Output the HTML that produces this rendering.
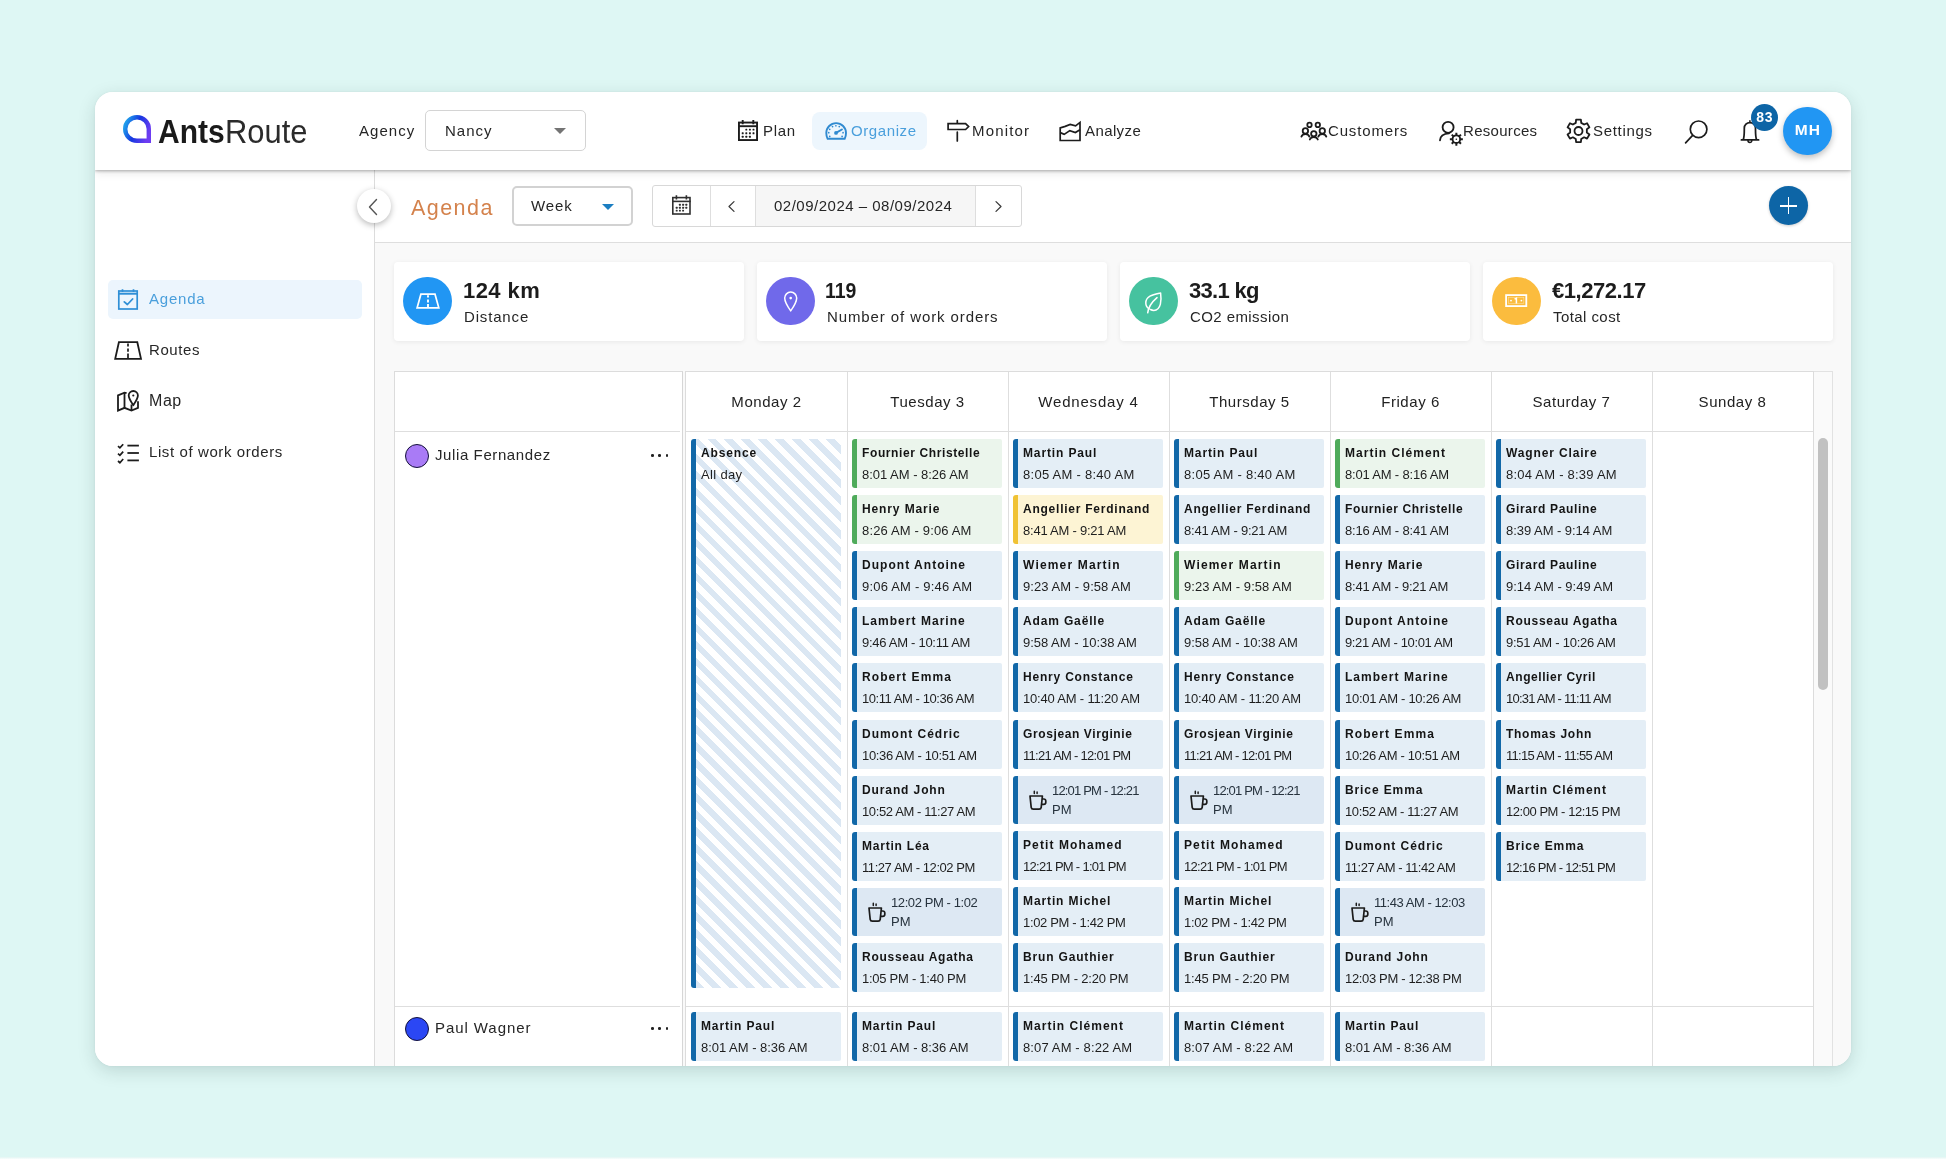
<!DOCTYPE html>
<html lang="en">
<head>
<meta charset="utf-8">
<title>AntsRoute - Agenda</title>
<style>
*{box-sizing:border-box;margin:0;padding:0}
html,body{width:1946px;height:1159px;overflow:hidden}
body{background:#def7f4;font-family:"Liberation Sans",sans-serif;color:#222;position:relative}
.abs{position:absolute}
#app{position:absolute;left:95px;top:92px;width:1756px;height:974px;background:#fff;border-radius:18px;box-shadow:0 5px 18px rgba(0,40,40,.15),0 0 3px rgba(0,35,35,.05);overflow:hidden}
/* everything inside #app is positioned in page coords via this wrapper */
#pg{position:absolute;left:-95px;top:-92px;width:1946px;height:1159px;will-change:transform}
#side{position:absolute;left:95px;top:170px;width:280px;height:896px;background:#fff;border-right:1px solid #dcdcdc}
#tool{position:absolute;left:375px;top:170px;width:1476px;height:73px;background:#fff;border-bottom:1px solid #dedede}
#content{position:absolute;left:375px;top:243px;width:1476px;height:823px;background:#f9f9f9}
#head{position:absolute;left:95px;top:92px;width:1756px;height:78px;background:#fff;box-shadow:0 1px 3px rgba(0,0,0,.3),0 3px 9px rgba(0,0,0,.09)}
.t{position:absolute;white-space:nowrap;line-height:20px;font-size:15px;color:#262626}
svg{position:absolute;overflow:visible}
svg.ic{fill:none;stroke:#1d1d1d;stroke-width:1.6;stroke-linecap:round;stroke-linejoin:round}
/* logo */
.lg{position:absolute;top:111.8px;font-size:33px;line-height:40px;white-space:nowrap;transform-origin:0 0}
#lgA{left:158px;font-weight:700;color:#1a1a1a;transform:scaleX(.909)}
#lgR{left:225.4px;color:#2b2b2b;transform:scaleX(.936)}
/* selects */
.box{position:absolute;background:#fff;border:1px solid #d4d4d4;border-radius:5px}
/* nav */
#pill{position:absolute;left:811.6px;top:111.7px;width:115px;height:38px;background:#edf6fd;border-radius:8px}
/* stats */
.card{position:absolute;top:262px;width:350px;height:79px;background:#fff;border-radius:4px;box-shadow:0 1px 5px rgba(0,0,0,.07)}
.circ{position:absolute;left:9.3px;top:14.9px;width:48.6px;height:48.6px;border-radius:50%}
.card .v{position:absolute;left:69px;top:14.6px;font-size:22px;font-weight:700;line-height:28px;color:#1c1c1c;white-space:nowrap}
.card .l{position:absolute;left:70px;top:45px;font-size:15px;line-height:20px;color:#262626;white-space:nowrap;letter-spacing:.6px}
/* grid */
.ln{position:absolute;background:#dedede}
.dh{position:absolute;top:391.7px;width:161px;text-align:center;font-size:15px;line-height:20px;color:#222;letter-spacing:.55px;white-space:nowrap}
.ev{position:absolute;width:150px;height:49px;border-left:5px solid #1268a8;border-radius:3px 2px 2px 3px;background:#e4eef6;padding:3px 0 0 5px;white-space:nowrap;overflow:hidden}
.ev b{display:block;font-size:12px;line-height:22px;font-weight:700;color:#141414;letter-spacing:.5px}
.ev i{display:block;font-style:normal;font-size:13px;line-height:21px;color:#1e1e1e;letter-spacing:-.02px}
.ev.g{background:#ebf5ec;border-left-color:#4fab5b}
.ev.y{background:#fdf4d4;border-left-color:#f0c234}
.ev.k{height:48px;background:#dde8f3;padding:0}
.ev.k .kt{position:absolute;left:34px;top:5px;font-size:13px;line-height:19px;color:#26323d;white-space:nowrap}
svg.cup{left:11px;top:15.5px;width:18px;height:20px;fill:none;stroke:#1b1b1b;stroke-width:1.7;stroke-linecap:round;stroke-linejoin:round}
#abs{position:absolute;left:691px;top:439px;width:150px;height:549px;border-left:5px solid #1268a8;border-radius:3px;background:repeating-linear-gradient(45deg,#dbe7f3 0,#dbe7f3 6px,#fff 6px,#fff 12px);padding:3px 0 0 5px}
#abs b{display:block;font-size:12px;line-height:22px;font-weight:700;color:#141414;letter-spacing:.85px}
#abs i{display:block;font-style:normal;font-size:13px;line-height:21px;color:#1e1e1e;letter-spacing:.33px}
.av{position:absolute;left:405px;width:24px;height:24px;border-radius:50%;border:1.5px solid #15123a}
.dots{position:absolute;left:651px;width:18px;height:3px}
.dots:before,.dots:after,.dots span{content:"";position:absolute;top:0;width:2.6px;height:2.6px;border-radius:50%;background:#222}
.dots:before{left:0}.dots span{left:7.4px}.dots:after{left:14.8px}
</style>
</head>
<body>
<div class="abs" style="left:0;top:1157px;width:1946px;height:2px;background:linear-gradient(#e3f5f2,#f8fefd)"></div>
<div id="app"><div id="pg">

<div id="side"></div>
<div id="tool"></div>
<div id="content"></div>
<div id="head"></div>

<!-- ===== HEADER ===== -->
<svg class="abs" style="left:122px;top:114px;width:30px;height:30px" viewBox="0 0 30 30">
 <defs><linearGradient id="lg" x1="0" y1="0.3" x2="1" y2="0.7"><stop offset="0" stop-color="#1f9ceb"/><stop offset=".45" stop-color="#1638e0"/><stop offset="1" stop-color="#6d3cf2"/></linearGradient></defs>
 <path d="M15 3.2A11.8 11.8 0 0 1 26.8 15V26.8H15A11.8 11.8 0 0 1 15 3.2Z" fill="none" stroke="url(#lg)" stroke-width="4.4"/>
</svg>
<div class="lg" id="lgA">Ants</div><div class="lg" id="lgR">Route</div>

<div class="t" style="left:359px;top:121px;letter-spacing:1.05px">Agency</div>
<div class="box" style="left:425px;top:110px;width:161px;height:41px"></div>
<div class="t" style="left:445px;top:121px;letter-spacing:1px">Nancy</div>
<div class="abs" style="left:554px;top:128px;border-left:6px solid transparent;border-right:6px solid transparent;border-top:6px solid #747474"></div>

<div id="pill"></div>
<div class="t" style="left:763px;top:121px;letter-spacing:.67px">Plan</div>
<div class="t" style="left:851px;top:121px;letter-spacing:.6px;color:#4a9fdc">Organize</div>
<div class="t" style="left:972px;top:121px;letter-spacing:1.18px">Monitor</div>
<div class="t" style="left:1085px;top:121px;letter-spacing:.4px">Analyze</div>
<div class="t" style="left:1328px;top:121px;letter-spacing:.84px">Customers</div>
<div class="t" style="left:1463px;top:121px;letter-spacing:.3px">Resources</div>
<div class="t" style="left:1593px;top:121px;letter-spacing:.68px">Settings</div>

<div class="abs" style="left:1783px;top:106.5px;width:48.6px;height:48.6px;border-radius:50%;background:#2196f3;box-shadow:0 3px 6px rgba(0,0,0,.25);color:#fff;font-size:15.5px;font-weight:700;line-height:46.6px;text-align:center;letter-spacing:.9px;text-indent:1px">MH</div>

<!-- ===== TOOLBAR ===== -->
<div class="abs" style="left:357px;top:189px;width:34px;height:34px;border-radius:50%;background:#fff;box-shadow:0 2px 6px rgba(0,0,0,.28)"></div>
<svg class="ic" style="left:367px;top:198px;width:12px;height:18px;stroke:#555;stroke-width:1.4" viewBox="0 0 12 18"><path d="M9.5 1.5 2.5 9l7 7.5"/></svg>
<div class="t" style="left:411px;top:193.4px;font-size:21.5px;line-height:30px;color:#d4824c;letter-spacing:1.45px">Agenda</div>
<div class="box" style="left:512px;top:185.5px;width:121px;height:40px;border:2px solid #d2d2d2;border-radius:5px"></div>
<div class="t" style="left:531px;top:196px;letter-spacing:.93px">Week</div>
<div class="abs" style="left:601.5px;top:203.5px;border-left:6px solid transparent;border-right:6px solid transparent;border-top:6px solid #1b7ec2"></div>

<div class="box" style="left:652px;top:185px;width:370px;height:42px;border-radius:3px;border-color:#d8d8d8"></div>
<div class="abs" style="left:755px;top:186px;width:221px;height:40px;background:#f6f6f6"></div>
<div class="ln" style="left:710px;top:186px;width:1px;height:40px"></div>
<div class="ln" style="left:755px;top:186px;width:1px;height:40px"></div>
<div class="ln" style="left:975px;top:186px;width:1px;height:40px"></div>
<div class="t" style="left:774px;top:196px;letter-spacing:.5px">02/09/2024 – 08/09/2024</div>
<svg class="ic" style="left:727px;top:200px;width:9px;height:13px;stroke:#3a3a3a;stroke-width:1.25" viewBox="0 0 9 13"><path d="M7 1.6 2 6.5 7 11.4"/></svg>
<svg class="ic" style="left:994px;top:200px;width:9px;height:13px;stroke:#3a3a3a;stroke-width:1.25" viewBox="0 0 9 13"><path d="M2 1.6 7 6.5 2 11.4"/></svg>

<div class="abs" style="left:1769.2px;top:186.4px;width:39px;height:39px;border-radius:50%;background:#0d65a6;box-shadow:0 1px 3px rgba(0,0,0,.2)"></div>
<div class="abs" style="left:1780px;top:205px;width:17px;height:1.6px;background:#fff"></div>
<div class="abs" style="left:1787.7px;top:197px;width:1.6px;height:17px;background:#fff"></div>

<!-- ===== SIDEBAR ===== -->
<div class="abs" style="left:108px;top:280px;width:254px;height:39px;border-radius:5px;background:#ecf5fd"></div>
<div class="t" style="left:149px;top:289px;letter-spacing:.8px;color:#4a9fdc">Agenda</div>
<div class="t" style="left:149px;top:340px;letter-spacing:.6px">Routes</div>
<div class="t" style="left:149px;top:391px;font-size:16px;letter-spacing:.55px">Map</div>
<div class="t" style="left:149px;top:442px;letter-spacing:.6px">List of work orders</div>
<!--SIDEICONS-->

<!-- ===== STATS ===== -->
<div class="card" style="left:394px"><div class="circ" style="background:#2196f3"></div><div class="v" style="letter-spacing:.44px">124 km</div><div class="l" style="letter-spacing:.84px">Distance</div></div>
<div class="card" style="left:757px"><div class="circ" style="background:#7069ea"></div><div class="v" style="left:68.2px;transform:scaleX(.885);transform-origin:0 0">119</div><div class="l" style="letter-spacing:.9px">Number of work orders</div></div>
<div class="card" style="left:1120px"><div class="circ" style="background:#46c29f"></div><div class="v" style="letter-spacing:-.7px">33.1 kg</div><div class="l" style="letter-spacing:.42px">CO2 emission</div></div>
<div class="card" style="left:1483px"><div class="circ" style="background:#fbbc3e"></div><div class="v" style="letter-spacing:-.45px">€1,272.17</div><div class="l" style="letter-spacing:.43px">Total cost</div></div>
<!--STATICONS-->

<!-- ===== GRID ===== -->
<div class="abs" style="left:394px;top:371px;width:288.6px;height:700px;background:#fff;border:1px solid #dcdcdc;border-right:1.6px solid #d6d6d6"></div>
<div class="abs" style="left:685px;top:371px;width:1129px;height:700px;background:#fff;border:1px solid #dcdcdc"></div>
<div class="abs" style="left:1814px;top:371px;width:19px;height:700px;background:#fafafa;border:1px solid #e2e2e2;border-left:0"></div>
<div class="abs" style="left:1818px;top:438px;width:10px;height:252px;border-radius:5px;background:#c1c1c1"></div>
<div class="ln" style="left:395px;top:431px;width:285px;height:1px"></div>
<div class="ln" style="left:686px;top:431px;width:1127px;height:1px"></div>
<div class="ln" style="left:395px;top:1006px;width:285px;height:1px"></div>
<div class="ln" style="left:686px;top:1006px;width:1127px;height:1px"></div>
<div class="ln" style="left:847px;top:372px;width:1px;height:700px"></div>
<div class="ln" style="left:1008px;top:372px;width:1px;height:700px"></div>
<div class="ln" style="left:1169px;top:372px;width:1px;height:700px"></div>
<div class="ln" style="left:1330px;top:372px;width:1px;height:700px"></div>
<div class="ln" style="left:1491px;top:372px;width:1px;height:700px"></div>
<div class="ln" style="left:1652px;top:372px;width:1px;height:700px"></div>

<div class="dh" style="left:686px">Monday 2</div>
<div class="dh" style="left:847px">Tuesday 3</div>
<div class="dh" style="left:1008px;letter-spacing:.8px">Wednesday 4</div>
<div class="dh" style="left:1169px">Thursday 5</div>
<div class="dh" style="left:1330px">Friday 6</div>
<div class="dh" style="left:1491px">Saturday 7</div>
<div class="dh" style="left:1652px">Sunday 8</div>

<div class="av" style="top:444px;background:#a97bf6"></div>
<div class="t" style="left:435px;top:445px;letter-spacing:.6px">Julia Fernandez</div>
<div class="dots" style="top:454px"><span></span></div>
<div class="av" style="top:1017px;background:#2b47f4"></div>
<div class="t" style="left:435px;top:1018px;letter-spacing:.93px">Paul Wagner</div>
<div class="dots" style="top:1027px"><span></span></div>

<div id="abs"><b>Absence</b><i>All day</i></div>
<div class="ev g" style="left:852px;top:439.1px"><b style="letter-spacing:0.61px">Fournier Christelle</b><i style="letter-spacing:-0.02px">8:01 AM - 8:26 AM</i></div>
<div class="ev g" style="left:852px;top:495.18px"><b style="letter-spacing:0.88px">Henry Marie</b><i style="letter-spacing:0.15px">8:26 AM - 9:06 AM</i></div>
<div class="ev b" style="left:852px;top:551.26px"><b style="letter-spacing:1.03px">Dupont Antoine</b><i style="letter-spacing:0.2px">9:06 AM - 9:46 AM</i></div>
<div class="ev b" style="left:852px;top:607.34px"><b style="letter-spacing:1.03px">Lambert Marine</b><i style="letter-spacing:-0.28px">9:46 AM - 10:11 AM</i></div>
<div class="ev b" style="left:852px;top:663.42px"><b style="letter-spacing:1.08px">Robert Emma</b><i style="letter-spacing:-0.44px">10:11 AM - 10:36 AM</i></div>
<div class="ev b" style="left:852px;top:719.5px"><b style="letter-spacing:0.98px">Dumont Cédric</b><i style="letter-spacing:-0.35px">10:36 AM - 10:51 AM</i></div>
<div class="ev b" style="left:852px;top:775.58px"><b style="letter-spacing:0.89px">Durand John</b><i style="letter-spacing:-0.38px">10:52 AM - 11:27 AM</i></div>
<div class="ev b" style="left:852px;top:831.66px"><b style="letter-spacing:0.78px">Martin Léa</b><i style="letter-spacing:-0.43px">11:27 AM - 12:02 PM</i></div>
<div class="ev k" style="left:852px;top:887.74px"><svg class="cup" viewBox="0 0 18 20"><path d="M5.3 0.3v2.3M8.1 0.9v1.7" stroke-width="1.5"/><path d="M1 5H13.4L12.2 16.4Q12 18.2 10.1 18.2H4.3Q2.4 18.2 2.2 16.4Z M13.1 8h1.6a2.1 2.1 0 0 1 2.1 2.1v1.1a2.1 2.1 0 0 1-2.1 2.1h-2.1"/></svg><span class="kt"><span style="letter-spacing:-0.41px">12:02 PM - 1:02</span><br>PM</span></div>
<div class="ev b" style="left:852px;top:943.14px"><b style="letter-spacing:0.72px">Rousseau Agatha</b><i style="letter-spacing:-0.26px">1:05 PM - 1:40 PM</i></div>
<div class="ev b" style="left:1013px;top:439.1px"><b style="letter-spacing:0.87px">Martin Paul</b><i style="letter-spacing:0.27px">8:05 AM - 8:40 AM</i></div>
<div class="ev y" style="left:1013px;top:495.18px"><b style="letter-spacing:0.76px">Angellier Ferdinand</b><i style="letter-spacing:-0.23px">8:41 AM - 9:21 AM</i></div>
<div class="ev b" style="left:1013px;top:551.26px"><b style="letter-spacing:1.17px">Wiemer Martin</b><i style="letter-spacing:0.06px">9:23 AM - 9:58 AM</i></div>
<div class="ev b" style="left:1013px;top:607.34px"><b style="letter-spacing:0.85px">Adam Gaëlle</b><i style="letter-spacing:-0.02px">9:58 AM - 10:38 AM</i></div>
<div class="ev b" style="left:1013px;top:663.42px"><b style="letter-spacing:0.8px">Henry Constance</b><i style="letter-spacing:-0.19px">10:40 AM - 11:20 AM</i></div>
<div class="ev b" style="left:1013px;top:719.5px"><b style="letter-spacing:0.61px">Grosjean Virginie</b><i style="letter-spacing:-0.72px">11:21 AM - 12:01 PM</i></div>
<div class="ev k" style="left:1013px;top:775.58px"><svg class="cup" viewBox="0 0 18 20"><path d="M5.3 0.3v2.3M8.1 0.9v1.7" stroke-width="1.5"/><path d="M1 5H13.4L12.2 16.4Q12 18.2 10.1 18.2H4.3Q2.4 18.2 2.2 16.4Z M13.1 8h1.6a2.1 2.1 0 0 1 2.1 2.1v1.1a2.1 2.1 0 0 1-2.1 2.1h-2.1"/></svg><span class="kt"><span style="letter-spacing:-0.82px">12:01 PM - 12:21</span><br>PM</span></div>
<div class="ev b" style="left:1013px;top:830.98px"><b style="letter-spacing:1.1px">Petit Mohamed</b><i style="letter-spacing:-0.71px">12:21 PM - 1:01 PM</i></div>
<div class="ev b" style="left:1013px;top:887.06px"><b style="letter-spacing:0.89px">Martin Michel</b><i style="letter-spacing:-0.34px">1:02 PM - 1:42 PM</i></div>
<div class="ev b" style="left:1013px;top:943.14px"><b style="letter-spacing:0.83px">Brun Gauthier</b><i style="letter-spacing:-0.17px">1:45 PM - 2:20 PM</i></div>
<div class="ev b" style="left:1174px;top:439.1px"><b style="letter-spacing:0.87px">Martin Paul</b><i style="letter-spacing:0.27px">8:05 AM - 8:40 AM</i></div>
<div class="ev b" style="left:1174px;top:495.18px"><b style="letter-spacing:0.76px">Angellier Ferdinand</b><i style="letter-spacing:-0.23px">8:41 AM - 9:21 AM</i></div>
<div class="ev g" style="left:1174px;top:551.26px"><b style="letter-spacing:1.17px">Wiemer Martin</b><i style="letter-spacing:0.06px">9:23 AM - 9:58 AM</i></div>
<div class="ev b" style="left:1174px;top:607.34px"><b style="letter-spacing:0.85px">Adam Gaëlle</b><i style="letter-spacing:-0.02px">9:58 AM - 10:38 AM</i></div>
<div class="ev b" style="left:1174px;top:663.42px"><b style="letter-spacing:0.8px">Henry Constance</b><i style="letter-spacing:-0.19px">10:40 AM - 11:20 AM</i></div>
<div class="ev b" style="left:1174px;top:719.5px"><b style="letter-spacing:0.61px">Grosjean Virginie</b><i style="letter-spacing:-0.72px">11:21 AM - 12:01 PM</i></div>
<div class="ev k" style="left:1174px;top:775.58px"><svg class="cup" viewBox="0 0 18 20"><path d="M5.3 0.3v2.3M8.1 0.9v1.7" stroke-width="1.5"/><path d="M1 5H13.4L12.2 16.4Q12 18.2 10.1 18.2H4.3Q2.4 18.2 2.2 16.4Z M13.1 8h1.6a2.1 2.1 0 0 1 2.1 2.1v1.1a2.1 2.1 0 0 1-2.1 2.1h-2.1"/></svg><span class="kt"><span style="letter-spacing:-0.82px">12:01 PM - 12:21</span><br>PM</span></div>
<div class="ev b" style="left:1174px;top:830.98px"><b style="letter-spacing:1.1px">Petit Mohamed</b><i style="letter-spacing:-0.71px">12:21 PM - 1:01 PM</i></div>
<div class="ev b" style="left:1174px;top:887.06px"><b style="letter-spacing:0.89px">Martin Michel</b><i style="letter-spacing:-0.34px">1:02 PM - 1:42 PM</i></div>
<div class="ev b" style="left:1174px;top:943.14px"><b style="letter-spacing:0.83px">Brun Gauthier</b><i style="letter-spacing:-0.17px">1:45 PM - 2:20 PM</i></div>
<div class="ev g" style="left:1335px;top:439.1px"><b style="letter-spacing:1.02px">Martin Clément</b><i style="letter-spacing:-0.18px">8:01 AM - 8:16 AM</i></div>
<div class="ev b" style="left:1335px;top:495.18px"><b style="letter-spacing:0.61px">Fournier Christelle</b><i style="letter-spacing:-0.18px">8:16 AM - 8:41 AM</i></div>
<div class="ev b" style="left:1335px;top:551.26px"><b style="letter-spacing:0.88px">Henry Marie</b><i style="letter-spacing:-0.23px">8:41 AM - 9:21 AM</i></div>
<div class="ev b" style="left:1335px;top:607.34px"><b style="letter-spacing:1.03px">Dupont Antoine</b><i style="letter-spacing:-0.36px">9:21 AM - 10:01 AM</i></div>
<div class="ev b" style="left:1335px;top:663.42px"><b style="letter-spacing:1.03px">Lambert Marine</b><i style="letter-spacing:-0.28px">10:01 AM - 10:26 AM</i></div>
<div class="ev b" style="left:1335px;top:719.5px"><b style="letter-spacing:1.08px">Robert Emma</b><i style="letter-spacing:-0.35px">10:26 AM - 10:51 AM</i></div>
<div class="ev b" style="left:1335px;top:775.58px"><b style="letter-spacing:0.89px">Brice Emma</b><i style="letter-spacing:-0.38px">10:52 AM - 11:27 AM</i></div>
<div class="ev b" style="left:1335px;top:831.66px"><b style="letter-spacing:0.98px">Dumont Cédric</b><i style="letter-spacing:-0.48px">11:27 AM - 11:42 AM</i></div>
<div class="ev k" style="left:1335px;top:887.74px"><svg class="cup" viewBox="0 0 18 20"><path d="M5.3 0.3v2.3M8.1 0.9v1.7" stroke-width="1.5"/><path d="M1 5H13.4L12.2 16.4Q12 18.2 10.1 18.2H4.3Q2.4 18.2 2.2 16.4Z M13.1 8h1.6a2.1 2.1 0 0 1 2.1 2.1v1.1a2.1 2.1 0 0 1-2.1 2.1h-2.1"/></svg><span class="kt"><span style="letter-spacing:-0.45px">11:43 AM - 12:03</span><br>PM</span></div>
<div class="ev b" style="left:1335px;top:943.14px"><b style="letter-spacing:0.89px">Durand John</b><i style="letter-spacing:-0.34px">12:03 PM - 12:38 PM</i></div>
<div class="ev b" style="left:1496px;top:439.1px"><b style="letter-spacing:0.86px">Wagner Claire</b><i style="letter-spacing:0.23px">8:04 AM - 8:39 AM</i></div>
<div class="ev b" style="left:1496px;top:495.18px"><b style="letter-spacing:0.66px">Girard Pauline</b><i style="letter-spacing:-0.04px">8:39 AM - 9:14 AM</i></div>
<div class="ev b" style="left:1496px;top:551.26px"><b style="letter-spacing:0.66px">Girard Pauline</b><i style="letter-spacing:0.01px">9:14 AM - 9:49 AM</i></div>
<div class="ev b" style="left:1496px;top:607.34px"><b style="letter-spacing:0.72px">Rousseau Agatha</b><i style="letter-spacing:-0.25px">9:51 AM - 10:26 AM</i></div>
<div class="ev b" style="left:1496px;top:663.42px"><b style="letter-spacing:0.57px">Angellier Cyril</b><i style="letter-spacing:-0.77px">10:31 AM - 11:11 AM</i></div>
<div class="ev b" style="left:1496px;top:719.5px"><b style="letter-spacing:0.73px">Thomas John</b><i style="letter-spacing:-0.69px">11:15 AM - 11:55 AM</i></div>
<div class="ev b" style="left:1496px;top:775.58px"><b style="letter-spacing:1.02px">Martin Clément</b><i style="letter-spacing:-0.46px">12:00 PM - 12:15 PM</i></div>
<div class="ev b" style="left:1496px;top:831.66px"><b style="letter-spacing:0.89px">Brice Emma</b><i style="letter-spacing:-0.72px">12:16 PM - 12:51 PM</i></div>
<div class="ev b" style="left:691px;top:1012px"><b style="letter-spacing:0.87px">Martin Paul</b><i style="letter-spacing:-0.02px">8:01 AM - 8:36 AM</i></div>
<div class="ev b" style="left:852px;top:1012px"><b style="letter-spacing:0.87px">Martin Paul</b><i style="letter-spacing:-0.02px">8:01 AM - 8:36 AM</i></div>
<div class="ev b" style="left:1013px;top:1012px"><b style="letter-spacing:1.02px">Martin Clément</b><i style="letter-spacing:0.13px">8:07 AM - 8:22 AM</i></div>
<div class="ev b" style="left:1174px;top:1012px"><b style="letter-spacing:1.02px">Martin Clément</b><i style="letter-spacing:0.13px">8:07 AM - 8:22 AM</i></div>
<div class="ev b" style="left:1335px;top:1012px"><b style="letter-spacing:0.87px">Martin Paul</b><i style="letter-spacing:-0.02px">8:01 AM - 8:36 AM</i></div>
<svg class="abs" style="left:0;top:0;width:1946px;height:1159px" viewBox="0 0 1946 1159">
<g stroke="#1c1c1c" stroke-width="1.9" fill="none" stroke-linejoin="miter" stroke-linecap="butt"><rect x="738.95" y="122.55" width="18.10" height="17.50"/><path d="M738.00 126.20H758.00" stroke-width="1.9"/><path d="M742.70 120.00v4.2M753.30 120.00v4.2" stroke-width="1.9"/></g><g fill="#1c1c1c"><rect x="745.35" y="128.65" width="1.9" height="1.9" rx=".5"/><rect x="748.95" y="128.65" width="1.9" height="1.9" rx=".5"/><rect x="752.55" y="128.65" width="1.9" height="1.9" rx=".5"/><rect x="741.75" y="132.25" width="1.9" height="1.9" rx=".5"/><rect x="745.35" y="132.25" width="1.9" height="1.9" rx=".5"/><rect x="748.95" y="132.25" width="1.9" height="1.9" rx=".5"/><rect x="752.55" y="132.25" width="1.9" height="1.9" rx=".5"/><rect x="741.75" y="135.85" width="1.9" height="1.9" rx=".5"/><rect x="745.35" y="135.85" width="1.9" height="1.9" rx=".5"/><rect x="748.95" y="135.85" width="1.9" height="1.9" rx=".5"/></g>
<g stroke="#303030" stroke-width="1.6" fill="none" stroke-linejoin="miter" stroke-linecap="butt"><rect x="672.80" y="197.60" width="17.20" height="16.40"/><path d="M672.00 201.40H690.80" stroke-width="1.6"/><path d="M676.42 195.20v4.2M686.38 195.20v4.2" stroke-width="1.6"/></g><g fill="#303030"><rect x="678.95" y="203.85" width="1.9" height="1.9" rx=".5"/><rect x="682.15" y="203.85" width="1.9" height="1.9" rx=".5"/><rect x="685.35" y="203.85" width="1.9" height="1.9" rx=".5"/><rect x="675.75" y="206.75" width="1.9" height="1.9" rx=".5"/><rect x="678.95" y="206.75" width="1.9" height="1.9" rx=".5"/><rect x="682.15" y="206.75" width="1.9" height="1.9" rx=".5"/><rect x="685.35" y="206.75" width="1.9" height="1.9" rx=".5"/><rect x="675.75" y="209.65" width="1.9" height="1.9" rx=".5"/><rect x="678.95" y="209.65" width="1.9" height="1.9" rx=".5"/><rect x="682.15" y="209.65" width="1.9" height="1.9" rx=".5"/></g>
<g stroke="#308ad0" fill="none" stroke-width="1.9" stroke-linecap="round" stroke-linejoin="round"><path d="M827.6 138.8C826.6 136.9 826.3 134.9 826.3 133a9.85 9.85 0 0 1 19.7 0c0 1.9-.3 3.9-1.3 5.8z"/><path d="M836 132.8 841.9 129.5" stroke-width="2"/></g><circle cx="836" cy="132.9" r="1.9" fill="#308ad0"/><g fill="#308ad0"><circle cx="842.09" cy="136.47" r=".85"/><circle cx="843.05" cy="132.65" r=".85"/><circle cx="839.26" cy="126.59" r=".85"/><circle cx="835.90" cy="125.75" r=".85"/><circle cx="832.54" cy="126.59" r=".85"/><circle cx="829.71" cy="129.33" r=".85"/><circle cx="828.75" cy="132.65" r=".85"/><circle cx="829.71" cy="136.47" r=".85"/></g>
<g stroke="#1c1c1c" fill="none" stroke-width="1.7" stroke-linejoin="miter" stroke-linecap="butt"><path d="M948.1 123.7H965.6L968.6 126.6L965.6 129.5H948.1Z"/><path d="M957.3 120.7V123.2M957.3 132.2V141" stroke-linecap="round"/></g>
<g stroke="#1c1c1c" fill="none" stroke-width="1.7" stroke-linejoin="miter" stroke-linecap="butt"><path d="M1060.2 127.9V140.5H1080V122.4L1075.6 125.8L1070.2 124.4L1065.2 126.4Z"/><path d="M1060.2 132.6L1064.2 134.4L1069.8 130.6L1075.4 132.6L1080 129.8"/></g>
<g stroke="#1c1c1c" fill="none" stroke-width="1.8" stroke-linecap="round"><circle cx="1309.5" cy="124.9" r="2.2"/><circle cx="1317.8" cy="124.9" r="2.2"/><circle cx="1305.4" cy="130.9" r="2.7"/><path d="M1301.40 136.60C1302.00 135.00 1303.00 134.20 1305.4 134.20S1308.80 135.00 1309.40 136.60"/><circle cx="1322.3" cy="130.9" r="2.7"/><path d="M1318.30 136.60C1318.90 135.00 1319.90 134.20 1322.3 134.20S1325.70 135.00 1326.30 136.60"/><circle cx="1313.8" cy="133.8" r="2.7"/><path d="M1309.80 139.50C1310.40 137.90 1311.40 137.10 1313.8 137.10S1317.20 137.90 1317.80 139.50"/></g>
<g stroke="#1c1c1c" fill="none" stroke-width="1.85" stroke-linecap="round"><circle cx="1448.1" cy="127.3" r="5.5"/><path d="M1440 140.3C1440.2 136.4 1443.6 133.6 1449 133.3"/></g>
<g stroke="#1c1c1c" fill="none"><circle cx="1456.35" cy="139.2" r="3.8" stroke-width="1.9"/><path d="M1460.35 139.20L1462.85 139.20M1459.18 142.03L1460.95 143.80M1456.35 143.20L1456.35 145.70M1453.52 142.03L1451.75 143.80M1452.35 139.20L1449.85 139.20M1453.52 136.37L1451.75 134.60M1456.35 135.20L1456.35 132.70M1459.18 136.37L1460.95 134.60" stroke-width="2" stroke-linecap="butt"/></g><circle cx="1456.35" cy="139.2" r="0.8" fill="#1c1c1c"/>
<path d="M1586.84 132.56 L1589.44 134.45 L1587.05 138.60 L1584.10 137.29 L1581.23 138.95 L1580.89 142.15 L1576.11 142.15 L1575.77 138.95 L1572.90 137.29 L1569.95 138.60 L1567.56 134.45 L1570.16 132.56 L1570.16 129.24 L1567.56 127.35 L1569.95 123.20 L1572.90 124.51 L1575.77 122.85 L1576.11 119.65 L1580.89 119.65 L1581.23 122.85 L1584.10 124.51 L1587.05 123.20 L1589.44 127.35 L1586.84 129.24Z" fill="none" stroke="#1c1c1c" stroke-width="1.8" stroke-linejoin="round"/><circle cx="1578.5" cy="131" r="4" fill="none" stroke="#1c1c1c" stroke-width="1.8"/>
<g stroke="#1c1c1c" fill="none" stroke-width="1.7" stroke-linecap="round"><circle cx="1698.6" cy="129.3" r="8.3"/><path d="M1692.4 135.7 1685.6 142.9"/></g>
<g stroke="#1c1c1c" fill="none" stroke-width="1.6" stroke-linecap="round" stroke-linejoin="round"><path d="M1741.4 139.9H1758.6M1743.1 139.9C1744.4 137.6 1744.3 135 1744.3 128.1A5.6 5.6 0 0 1 1755.5 128.1C1755.5 135 1755.4 137.6 1756.7 139.9" stroke-width="1.75"/><path d="M1749.9 121.6V120.9"/><path d="M1748 140.6A1.9 1.9 0 0 0 1751.8 140.6"/></g>
<g stroke="#2f8fd6" fill="none" stroke-width="1.7" stroke-linejoin="miter"><rect x="118.8" y="291" width="18.4" height="18"/><path d="M118 293.7H138" stroke-width="2"/><path d="M122.5 289.3V292M133.5 289.3V292"/><path d="M124.3 301.9 127.4 304.5 132.6 299" stroke-linecap="round" stroke-linejoin="round" stroke-width="1.8"/></g>
<g stroke="#1c1c1c" fill="none" stroke-width="1.8" stroke-linejoin="miter"><path d="M118.9 342.2H137.3L141 358.8H115.2Z"/><path d="M128 343.4V346.6M128 348.4V351.8M128 353.6V358.2" stroke-width="1.7"/></g>
<g stroke="#1c1c1c" fill="none" stroke-width="1.8" stroke-linejoin="miter" stroke-linecap="butt"><path d="M126.6 393.2 124.5 392.6 118 395.4V410.6L124.5 407.8 131.5 410.6 138 407.9V401.2"/><path d="M124.5 392.6V407.8M131.5 404.6V410.6"/><path d="M133.3 405.2C130.6 401.3 128.7 398.6 128.7 395.6A4.6 4.6 0 0 1 137.9 395.6C137.9 398.6 136 401.3 133.3 405.2Z" stroke-linejoin="round"/></g><circle cx="133.3" cy="395.5" r="1.1" fill="#1c1c1c"/>
<g stroke="#1c1c1c" fill="none" stroke-linecap="butt" stroke-linejoin="miter"><path d="M127.4 445.6H138.9" stroke-width="1.8"/><path d="M118 446.2L119.9 447.9L123.2 444.2" stroke-width="1.7"/><path d="M127.4 453.0H138.9" stroke-width="1.8"/><path d="M118 453.6L119.9 455.3L123.2 451.6" stroke-width="1.7"/><path d="M127.4 460.4H138.9" stroke-width="1.8"/><path d="M118 461.0L119.9 462.7L123.2 459.0" stroke-width="1.7"/></g>
<g stroke="#fff" fill="none" stroke-width="1.7" stroke-linejoin="miter"><path d="M420.9 294.2H435L438.8 307.8H417.1Z"/><path d="M428 295.2V297.6M428 299.4V302.4M428 304V307.4" stroke-width="1.9"/></g>
<g stroke="#fff" fill="none" stroke-width="1.5" stroke-linejoin="round"><path d="M790.7 310.9C786.6 305.2 784.7 301.5 784.7 298.1A6 6 0 0 1 796.7 298.1C796.7 301.5 794.8 305.2 790.7 310.9Z"/></g><circle cx="790.7" cy="298.1" r="1.3" fill="#fff"/>
<g stroke="#fff" fill="none" stroke-width="1.5" stroke-linecap="round" stroke-linejoin="round"><path d="M1160.6 292.9C1153.4 294.6 1145.8 295.9 1145.8 303C1145.8 305.6 1147.3 307.7 1149.2 308.8M1160.6 292.9C1161.5 299.6 1161.4 310.4 1153.8 310.4C1152.6 310.4 1151.5 310.1 1150.5 309.5"/><path d="M1157 297.6C1151.4 302.4 1148.3 307 1147.7 312.8"/></g>
<g stroke="#fff" fill="none" stroke-width="1.8" stroke-linejoin="miter"><rect x="1506.1" y="295.1" width="20.2" height="11"/></g><rect x="1508.6" y="297.6" width="15.2" height="6" fill="none" stroke="#fff" stroke-width=".6" opacity=".5"/><path d="M1514.6 299.2 1516.4 298.2V303.4" stroke="#fff" stroke-width="1.5" fill="none"/><circle cx="1511" cy="300.6" r=".9" fill="#fff"/><circle cx="1521.4" cy="300.6" r=".9" fill="#fff"/>
</svg>
<div class="abs" style="left:1751px;top:104px;width:27px;height:27px;border-radius:50%;background:#0d65a6;color:#fff;font-size:14px;font-weight:700;line-height:27px;text-align:center;letter-spacing:.7px;text-indent:.6px">83</div>

</div></div>
</body>
</html>
